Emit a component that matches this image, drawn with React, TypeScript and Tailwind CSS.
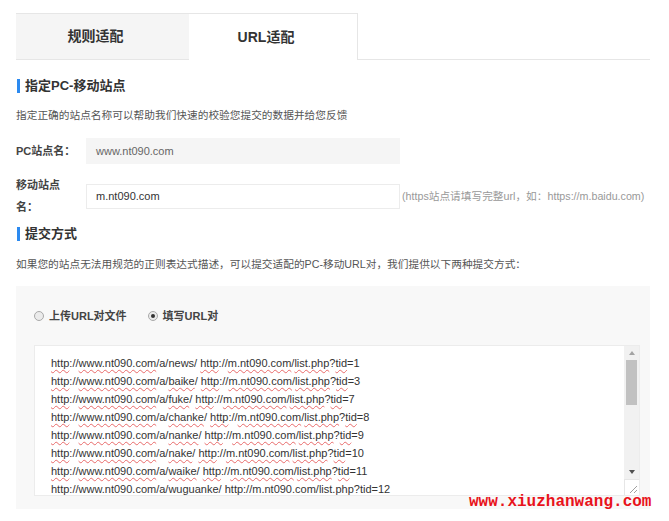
import React from 'react';

const pairs: [string, number][] = [
    ['news', 1],
    ['baike', 3],
    ['fuke', 7],
    ['chanke', 8],
    ['nanke', 9],
    ['nake', 10],
    ['waike', 11],
    ['wuguanke', 12],
];

export default function App() {
    return (
        <div className="relative min-h-[521px] w-[669px] bg-white pt-[13px] pl-4 font-['Liberation_Sans','Noto_Sans_CJK_SC',sans-serif] text-[#333]">
            {/* Tabs */}
            <div className="flex h-[47px] w-[634px]">
                <div className="flex w-[173px] items-center justify-center border-y border-[#e6e6e6] bg-[#f5f5f5] pr-[14px] text-[14px] font-bold">
                    规则适配
                </div>
                <div className="flex w-[169px] items-center justify-center border-t border-r border-[#e6e6e6] bg-white pr-[14px] text-[14px] font-bold">
                    URL适配
                </div>
                <div className="flex-1 border-b border-[#e6e6e6]" />
            </div>

            <SectionTitle className="mt-[19px]">指定PC-移动站点</SectionTitle>
            <p className="mt-[14px] text-[10.7px] leading-4 text-[#555]">
                指定正确的站点名称可以帮助我们快速的校验您提交的数据并给您反馈
            </p>

            {/* Site fields */}
            <div className="mt-[15px] flex items-center gap-2">
                <Label>PC站点名：</Label>
                <div className="flex h-[26px] w-[314px] items-center bg-[#f5f5f5] px-[10px] text-[11px] text-[#666]">
                    www.nt090.com
                </div>
            </div>
            <div className="mt-[10px] flex items-center gap-2">
                <Label>移动站点名：</Label>
                <div className="flex h-[25px] w-[314px] items-center border border-[#ececec] bg-white px-[9px] text-[11px] text-[#333]">
                    m.nt090.com
                </div>
                <span className="-ml-[6px] text-[10.7px] whitespace-nowrap text-[#999]">
                    (https站点请填写完整url，如：https://m.baidu.com)
                </span>
            </div>

            <SectionTitle className="mt-[9px]">提交方式</SectionTitle>
            <p className="mt-[15px] text-[10.7px] leading-4 text-[#555]">
                如果您的站点无法用规范的正则表达式描述，可以提交适配的PC-移动URL对，我们提供以下两种提交方式：
            </p>

            {/* Submit panel */}
            <div className="mt-[14px] w-[634px] bg-[#f8f8f8] pt-[23px] pr-[10px] pb-[13px] pl-[18px]">
                <div className="flex h-[14px] items-center text-[11px] font-bold text-[#444]">
                    <Radio />
                    <span className="ml-[5px]">上传URL对文件</span>
                    <span className="ml-[21px]">
                        <Radio checked />
                    </span>
                    <span className="ml-[5px]">填写URL对</span>
                </div>

                <div className="mt-[22px] flex h-[151px] border border-[#ececec] bg-white">
                    <div className="flex-1 overflow-hidden pt-[8px] pl-[16px] text-[11px] leading-[18px] whitespace-nowrap text-[#333]">
                        {pairs.map(([slug, tid]) => (
                            <div key={slug}>
                                <Typo>http</Typo>://<Typo>www.nt090.com</Typo>/a/
                                {slug === 'news' ? slug : <Typo>{slug}</Typo>}/{' '}
                                <Typo>http</Typo>://<Typo>m.nt090.com</Typo>/
                                <Typo>list.php</Typo>?<Typo>tid</Typo>={tid}
                            </div>
                        ))}
                    </div>
                    <div className="flex w-[15px] flex-col bg-[#f1f1f1]">
                        <div className="flex h-[14px] items-center justify-center">
                            <div className="h-0 w-0 border-x-[3px] border-b-[4px] border-x-transparent border-b-[#a3a3a3]" />
                        </div>
                        <div className="mx-[2px] h-[45px] bg-[#c1c1c1]" />
                        <div className="flex-1" />
                        <div className="flex h-[14px] items-center justify-center">
                            <div className="h-0 w-0 border-x-[3px] border-t-[4px] border-x-transparent border-t-[#505050]" />
                        </div>
                        <div className="flex h-[16px] items-end justify-end border-t border-l border-[#e6e6e6] bg-white p-[2px]">
                            <svg width="7" height="7" viewBox="0 0 7 7">
                                <path d="M7 0 L0 7 M7 4 L4 7" stroke="#a0a0a0" strokeWidth="1" />
                            </svg>
                        </div>
                    </div>
                </div>
            </div>

            <div className="absolute top-[494px] left-[469px] font-['Liberation_Mono',monospace] text-[16px] leading-4 font-bold text-[#e8131b]">
                www.xiuzhanwang.com
            </div>
        </div>
    );
}

function SectionTitle({
    className,
    children,
}: {
    className?: string;
    children: React.ReactNode;
}) {
    return (
        <div className={`flex h-[14px] items-center ${className ?? ''}`}>
            <span className="ml-px h-[14px] w-[3px] bg-[#2c8af0]" />
            <h2 className="ml-[5px] text-[13px] leading-[14px] font-bold text-[#333]">
                {children}
            </h2>
        </div>
    );
}

function Label({ children }: { children: React.ReactNode }) {
    return (
        <span className="w-[62px] shrink-0 text-[11px] leading-[22px] font-bold text-[#444]">
            {children}
        </span>
    );
}

function Radio({ checked }: { checked?: boolean }) {
    return (
        <span className="flex size-[10px] items-center justify-center rounded-full border border-[#a9a9a9] bg-[#ebebeb]">
            {checked && <span className="size-[4px] rounded-full bg-[#333]" />}
        </span>
    );
}

function Typo({ children }: { children: React.ReactNode }) {
    return (
        <span className="underline decoration-[#e86a6a] decoration-wavy decoration-1 underline-offset-[2px]">
            {children}
        </span>
    );
}
